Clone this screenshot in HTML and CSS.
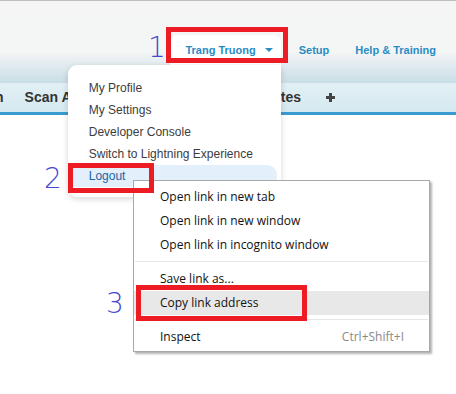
FILE: index.html
```html
<!DOCTYPE html>
<html lang="en">
  <head>
    <meta charset="UTF-8" />
    <meta name="viewport" content="width=device-width, initial-scale=1.0" />
    <title>Logout link</title>
    <link rel="stylesheet" href="styles.css">
  </head>
  <body>
    <div class="page">
      <header class="top-bar">
        <nav class="user-nav">
          <div class="user-menu">
            <span class="user-name">Trang Truong</span>
            <span class="caret"></span>
            <ul class="user-dropdown">
              <li>My Profile</li>
              <li>My Settings</li>
              <li>Developer Console</li>
              <li>Switch to Lightning Experience</li>
              <li class="active">Logout</li>
            </ul>
          </div>
          <a class="nav-link" href="#">Setup</a>
          <a class="nav-link" href="#">Help &amp; Training</a>
        </nav>
      </header>

      <nav class="tab-bar">
        <span class="tab">Plan</span>
        <span class="tab">Scan Apps</span>
        <span class="tab">Reports</span>
        <span class="tab">Leads</span>
        <span class="tab">Quotes</span>
        <span class="tab tab-add">
          <svg width="9" height="9" viewBox="0 0 9 9"><rect x="3" y="0" width="3" height="9"/><rect x="0" y="3" width="9" height="3"/></svg>
        </span>
      </nav>

      <!-- browser right-click menu on the Logout link -->
      <ul class="context-menu">
        <li>Open link in new tab</li>
        <li>Open link in new window</li>
        <li>Open link in incognito window</li>
        <li class="sep"></li>
        <li>Save link as...</li>
        <li class="hover">Copy link address</li>
        <li class="sep"></li>
        <li>Inspect <span class="shortcut">Ctrl+Shift+I</span></li>
      </ul>

      <!-- step annotations -->
      <div class="mark mark-1"></div>
      <div class="mark mark-2"></div>
      <div class="mark mark-3"></div>
      <span class="step step-1">1</span>
      <span class="step step-2">2</span>
      <span class="step step-3">3</span>
    </div>
  </body>
</html>
```

FILE: styles.css
```css
* {
  box-sizing: border-box;
  margin: 0;
  padding: 0;
}

body {
  background-color: #fff;
  font-family: "Liberation Sans", Arial, sans-serif;
  overflow: hidden;
}

ul {
  list-style: none;
}

.page {
  position: relative;
  width: 456px;
  height: 394px;
}

.top-bar {
  height: 83px;
  border-top: 1px solid #bdbdbd;
  background: linear-gradient(#f5f5f5 0, #f4f5f5 62%, #c8dee7 100%);
  padding-top: 34px;
}

.user-nav {
  display: flex;
  justify-content: flex-end;
  align-items: center;
  height: 30px;
  padding-right: 20px;
}

.user-menu {
  position: relative;
  display: flex;
  align-items: center;
  height: 30px;
  padding: 0 8px 0 15px;
  background-color: #fff;
  border-radius: 8px 8px 0 0;
}

.user-name,
.nav-link {
  font-size: 11px;
  font-weight: bold;
  color: #2a8cc4;
  text-decoration: none;
}

.caret {
  margin-left: 9px;
  border-style: solid;
  border-width: 4px 4px 0;
  border-color: #2a8cc4 transparent transparent;
}

.nav-link {
  margin-left: 18px;
}

.nav-link + .nav-link {
  margin-left: 26px;
}

.user-dropdown {
  position: absolute;
  top: 100%;
  right: 0;
  z-index: 5;
  width: 213px;
  padding: 12px 4px 10px 0;
  background-color: #fff;
  border-radius: 9px 0 9px 9px;
  box-shadow: 0 2px 6px rgba(0, 0, 0, 0.16);
}

.user-dropdown li {
  height: 22px;
  line-height: 22px;
  padding-left: 21px;
  font-size: 12px;
  color: #3c3c3c;
  white-space: nowrap;
}

.user-dropdown li.active {
  background-color: #e3effa;
  border-radius: 0 10px 10px 0;
  color: #1b64a6;
}

.tab-bar {
  display: flex;
  align-items: center;
  gap: 21px;
  height: 32px;
  margin-left: -26px;
  background: linear-gradient(#e2f0f5, #d5e9f0);
  border-bottom: 3px solid #3a9bd0;
  white-space: nowrap;
}

.tab {
  font-size: 14px;
  font-weight: bold;
  color: #333;
  line-height: 29px;
}

.tab-add {
  display: flex;
  margin-left: 4px;
  fill: #444;
}

.context-menu {
  position: absolute;
  left: 133px;
  top: 180px;
  z-index: 10;
  width: 297px;
  padding: 4px 0 2px;
  background-color: #fff;
  border: 1px solid #a8a8a8;
  box-shadow: 2px 2px 2px rgba(0, 0, 0, 0.3);
  font-family: "Open Sans", "Noto Sans", sans-serif;
  font-size: 12px;
  color: #111;
}

.context-menu li {
  display: flex;
  justify-content: space-between;
  height: 24px;
  line-height: 24px;
  padding: 0 25px 0 26px;
}

.context-menu li.sep {
  height: 1px;
  margin: 4px 1px 5px;
  padding: 0;
  background-color: #e6e6e6;
}

.context-menu li.hover {
  background-color: #e8e8e8;
}

.shortcut {
  color: #8a8a8a;
}

.mark {
  position: absolute;
  z-index: 20;
  border: 5px solid #ed1c24;
}

.mark-1 {
  left: 166px;
  top: 27px;
  width: 122px;
  height: 36px;
}

.mark-2 {
  left: 68px;
  top: 163px;
  width: 86px;
  height: 30px;
}

.mark-3 {
  left: 136px;
  top: 285px;
  width: 171px;
  height: 36px;
}

.step {
  position: absolute;
  z-index: 20;
  font-family: "DejaVu Sans", sans-serif;
  font-weight: 200;
  font-size: 28px;
  line-height: 1;
  color: #4747d4;
}

.step-1 {
  left: 148px;
  top: 34px;
}

.step-2 {
  left: 44px;
  top: 165px;
}

.step-3 {
  left: 106px;
  top: 290px;
}
```
